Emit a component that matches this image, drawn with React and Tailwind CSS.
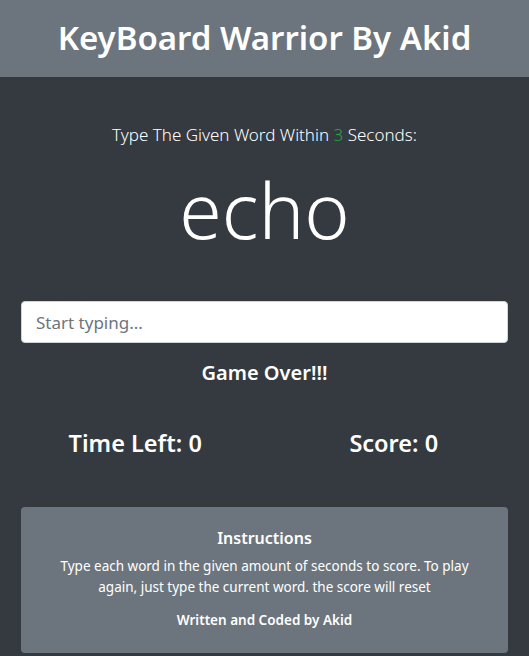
export default function App() {
  return (
    <div
      className="min-h-screen bg-[#343a40] text-white"
      style={{ fontFamily: '"Noto Sans", "Open Sans", sans-serif' }}
    >
      {/* Header */}
      <header className="h-[77px] bg-[#6c757d] flex items-center justify-center">
        <h1 className="text-[33px] font-semibold leading-none -mt-[2px]">KeyBoard Warrior By Akid</h1>
      </header>

      <main className="px-[21px]">
        {/* Prompt */}
        <p className="mt-[49px] text-center text-[17px] font-light leading-none">
          Type The Given Word Within <span className="text-[#28a745]">3</span> Seconds:
        </p>
        <h2 className="mt-[28px] text-center text-[77px] font-light leading-none">echo</h2>

        {/* Input */}
        <input
          type="text"
          placeholder="Start typing..."
          className="mt-[53px] block w-full h-[42px] px-[14px] text-[17px] rounded-[4px] border border-[#ced4da] bg-white text-[#495057] placeholder-[#6c757d] outline-none"
        />

        <p className="mt-[20px] text-center text-[20px] font-semibold leading-none">Game Over!!!</p>

        {/* Stats */}
        <div className="mt-[49px] -mx-[15px] grid grid-cols-2 text-center">
          <h3 className="text-[23.5px] font-semibold leading-none">Time Left: 0</h3>
          <h3 className="text-[23.5px] font-semibold leading-none">Score: 0</h3>
        </div>

        {/* Instructions card */}
        <div className="mt-[51px] rounded-[4px] bg-[#6c757d] px-[24px] pt-[21px] pb-[26px] text-center">
          <h5 className="text-[16px] font-semibold leading-tight">Instructions</h5>
          <p className="mt-[8px] text-[13.5px] leading-[21px]">
            Type each word in the given amount of seconds to score. To play again, just type the current word. the score will reset
          </p>
          <p className="mt-[16px] text-[13.5px] font-semibold leading-none">Written and Coded by Akid</p>
        </div>
      </main>
    </div>
  );
}
